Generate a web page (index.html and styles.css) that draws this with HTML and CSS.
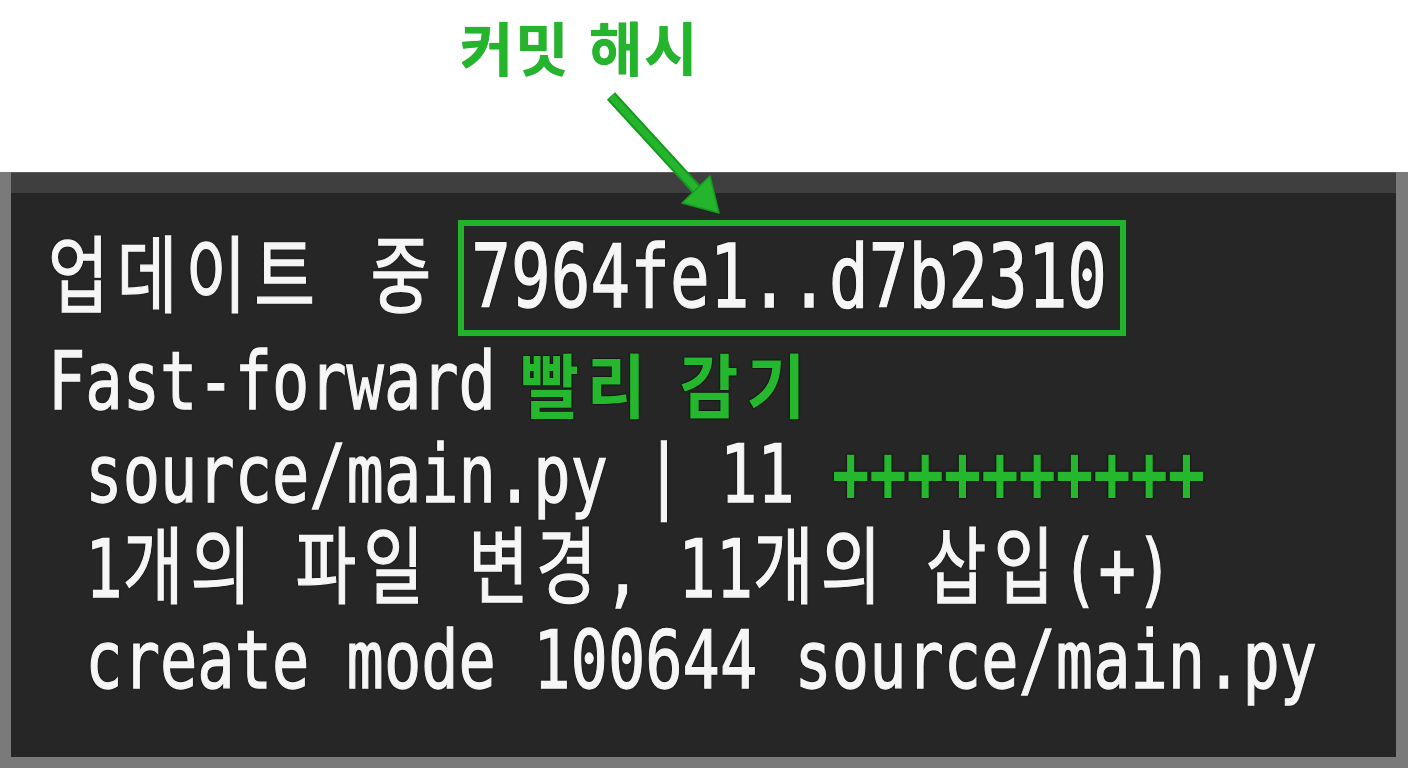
FILE: index.html
```html
<!DOCTYPE html>
<html lang="ko">
<head>
<meta charset="utf-8">
<title>커밋 해시</title>
<link rel="stylesheet" href="styles.css">
</head>
<body>
<div class="page">
  <header class="top">
    <div class="label">커밋 해시</div>
  </header>
  <svg class="arrow" width="1408" height="240" viewBox="0 0 1408 240">
    <line x1="611" y1="96" x2="699" y2="192" stroke="#169a20" stroke-width="11" stroke-linecap="butt"/>
    <line x1="611" y1="96" x2="699" y2="192" stroke="#24b52d" stroke-width="7" stroke-linecap="butt"/>
    <polygon points="719,213 682,203 710,176" fill="#24b52d" stroke="#169a20" stroke-width="1.5" stroke-linejoin="round"/>
  </svg>
  <section class="term">
    <div class="bar"></div>
    <div class="body">
      <div class="line l1"><span class="t ko k1">업데이트 중</span><span class="hash"><span class="t h">7964fe1..d7b2310</span></span></div>
      <div class="line"><span class="t">Fast-forward</span><span class="t green bold ff">빨리 감기</span></div>
      <div class="line"><span class="t"> source/main.py | 11 </span><span class="t green bold plus">++++++++++</span></div>
      <div class="line"><span class="t"> 1<span class="ko">개의</span> <span class="ko">파일</span> <span class="ko">변경</span>, 11<span class="ko">개의</span> <span class="ko">삽입</span>(+)</span></div>
      <div class="line"><span class="t"> create mode 100644 source/main.py</span></div>
    </div>
  </section>
</div>
</body>
</html>
```

FILE: styles.css
```css
html, body {
  margin: 0;
  padding: 0;
  background: #ffffff;
}

.page {
  position: relative;
  width: 1408px;
  height: 768px;
  overflow: hidden;
}

.top {
  height: 172px;
  box-sizing: border-box;
  padding-top: 8px;
}

.label {
  margin-left: 460px;
  font-family: "Noto Sans CJK KR", sans-serif;
  font-weight: 700;
  font-size: 58px;
  line-height: 76px;
  color: #24b52d;
  letter-spacing: 2px;
  text-shadow: 0 0 1px #137a1a;
}

.arrow {
  position: absolute;
  left: 0;
  top: 0;
  pointer-events: none;
  z-index: 2;
}

.term {
  height: 596px;
  box-sizing: border-box;
  background: #262626;
  border-left: 11px solid #7a7a7a;
  border-right: 12px solid #7a7a7a;
  border-bottom: 11px solid #7a7a7a;
  display: flex;
  flex-direction: column;
}

.bar {
  height: 20px;
  background: #3f3f3f;
  border-top: 1px solid #5c5c5c;
  flex: none;
}

.body {
  padding: 27px 0 0 37px;
  font-family: "DejaVu Sans Mono", "Noto Sans CJK KR", monospace;
  font-size: 62px;
  color: #f6f6f6;
}

.line {
  height: 93px;
  line-height: 93px;
  display: flex;
  align-items: center;
  white-space: pre;
}

.l1 {
  height: 116px;
  line-height: 104px;
}

.t {
  display: inline-block;
  transform: scaleY(1.28);
  transform-origin: 50% 52%;
  -webkit-text-stroke: 1px #f6f6f6;
  text-shadow: 0 0 2px #000, 0 0 1px #000;
}

.ko {
  font-size: 66px;
  letter-spacing: 7px;
}

.k1 {
  letter-spacing: 8px;
}

.hash {
  margin-left: 19px;
  border: 6px solid #22b22b;
  padding: 0 13px 0 7px;
  height: 104px;
  display: flex;
  align-items: center;
  box-shadow: 0 0 2px #0a4d0e;
}

.h {
  font-size: 66px;
  letter-spacing: 0;
  transform: scaleY(1.33);
}

.green {
  color: #25b82e;
  -webkit-text-stroke: 0;
}

.bold {
  font-weight: 700;
}

.ff {
  font-family: "Noto Sans CJK KR", sans-serif;
  font-size: 64px;
  letter-spacing: 8px;
  margin-left: 24px;
  transform: scaleY(1.1);
}

.plus {
  font-weight: 700;
}
```
